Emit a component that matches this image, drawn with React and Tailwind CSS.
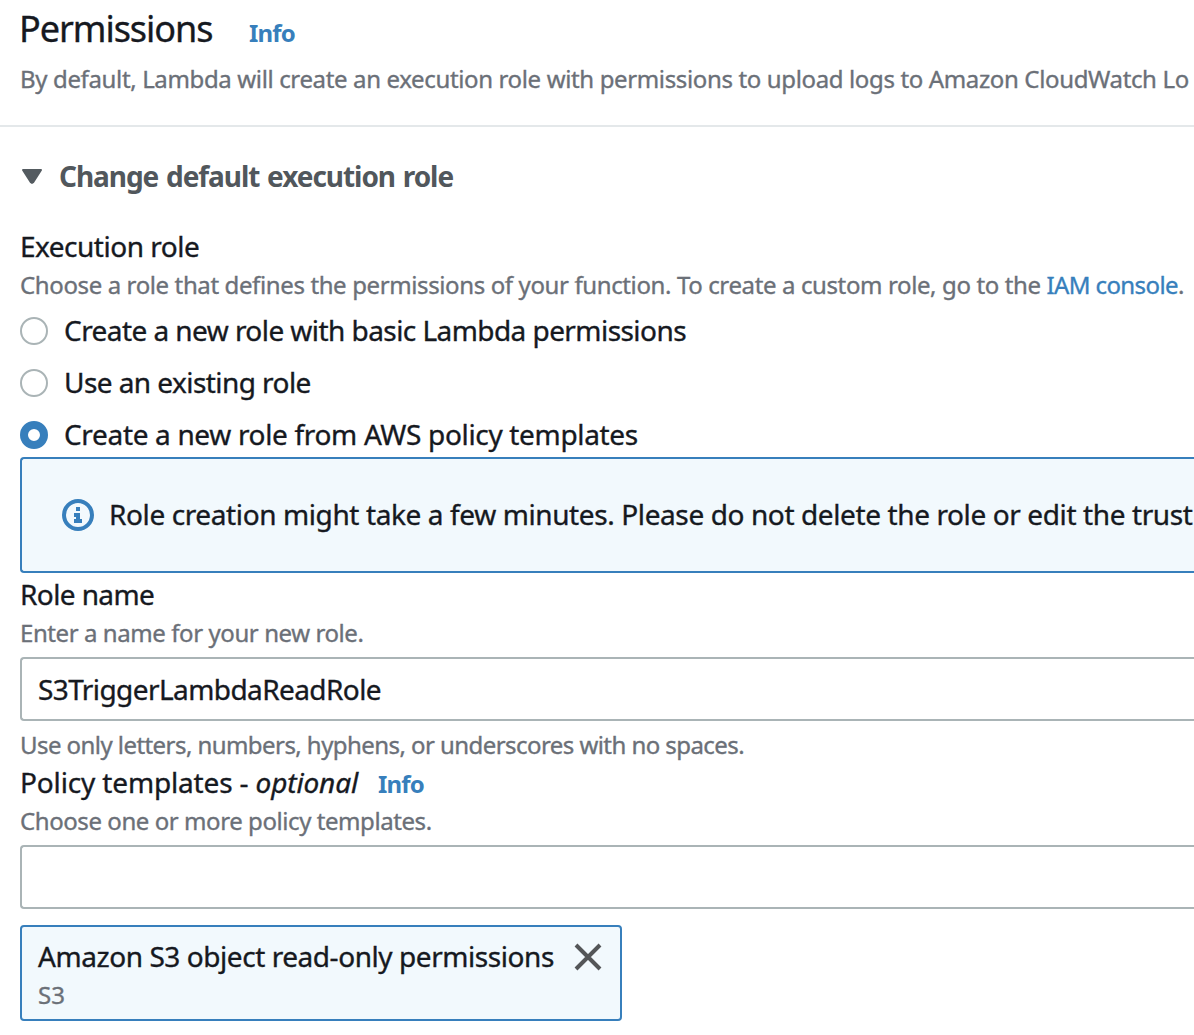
function Hint({ className = '', children }) {
  return (
    <p className={`h-9 whitespace-pre text-[24px] leading-9 text-[#6b7078] ${className}`}>{children}</p>
  );
}

function Label({ className = '', children }) {
  return (
    <div className={`h-9 whitespace-pre text-[28px] leading-9 ${className}`}>{children}</div>
  );
}

function InfoLink({ className = '' }) {
  return (
    <a className={`text-[24px] font-bold tracking-[-0.8px] text-[#377fbc] [-webkit-text-stroke:0px] ${className}`}>Info</a>
  );
}

function Radio({ checked, className, children }) {
  return (
    <label className="flex h-[52px] items-center">
      <span
        className={
          checked
            ? 'size-7 shrink-0 rounded-full border-8 border-[#377fbc] bg-white'
            : 'size-7 shrink-0 rounded-full border-2 border-[#aab4b6] bg-white'
        }
      />
      <span className={`ml-4 whitespace-nowrap pb-[3px] text-[28px] leading-9 ${className}`}>{children}</span>
    </label>
  );
}

function InfoIcon() {
  return (
    <svg className="size-8 shrink-0" viewBox="0 0 32 32" fill="none">
      <circle cx="16" cy="16" r="14" stroke="#377fbc" strokeWidth="4" />
      <path d="M14 8h4v4h-4zM12 14h6v6h2v4h-8v-4h2v-2h-2z" fill="#377fbc" />
    </svg>
  );
}

export default function App() {
  return (
    <div className="h-[1035px] w-full overflow-hidden bg-white font-['Noto_Sans',sans-serif] text-[#16191f] [-webkit-text-stroke:0.35px]">
      <header className="flex h-[125px] flex-col border-b-2 border-[#e4e8ea] box-content pl-5">
        <div className="flex h-14 items-baseline whitespace-nowrap leading-[58px]">
          <h1 className="-ml-px w-[230px] text-[36px] tracking-[-1.05px]">Permissions</h1>
          <InfoLink />
        </div>
        <Hint className="mt-[5px] tracking-[-0.36px]">
          By default, Lambda will create an execution role with permissions to upload logs to Amazon CloudWatch Lo
        </Hint>
      </header>

      <main className="pl-5">
        <div className="mt-[31px] flex h-9 items-center">
          <svg className="h-[18px] w-6" viewBox="0 0 24 18">
            <path d="M3 3h18l-8 12.4q-1 1-2 0z" fill="#545b60" stroke="#545b60" strokeWidth="2" strokeLinejoin="round" />
          </svg>
          <h2 className="ml-[15px] whitespace-nowrap text-[28px] font-bold leading-[38px] tracking-[-1.05px] [word-spacing:1.5px] text-[#51575c] [-webkit-text-stroke:0px]">
            Change default execution role
          </h2>
        </div>

        <Label className="mt-[34px] tracking-[-0.5px]">Execution role</Label>
        <Hint className="mt-[3px] tracking-[-0.38px]">
          Choose a role that defines the permissions of your function. To create a custom role, go to the{' '}
          <a className="tracking-[-0.6px] text-[#377fbc]">IAM console</a>.
        </Hint>

        <div className="mt-0.5">
          <Radio className="tracking-[-0.56px]">Create a new role with basic Lambda permissions</Radio>
          <Radio className="tracking-[-0.56px]">Use an existing role</Radio>
          <Radio checked className="tracking-[-0.33px]">Create a new role from AWS policy templates</Radio>
        </div>

        <div className="-mt-1 flex h-[116px] items-center rounded-l-[4px] border-2 border-r-0 border-[#377fbc] bg-[#f2f9fd] pl-10">
          <InfoIcon />
          <span className="ml-[15px] whitespace-nowrap pb-[3px] text-[28px] leading-9 tracking-[-0.39px]">
            Role creation might take a few minutes. Please do not delete the role or edit the trust
          </span>
        </div>

        <Label className="mt-[3px] tracking-[-0.6px]">Role name</Label>
        <Hint className="mt-[3px] tracking-[-0.42px]">Enter a name for your new role.</Hint>
        <div className="mt-1.5 flex h-16 items-center rounded-l-[4px] border-2 border-r-0 border-[#aab4b6] pb-px pl-4 text-[28px] tracking-[-0.58px]">
          S3TriggerLambdaReadRole
        </div>
        <Hint className="mt-1.5 tracking-[-0.56px]">
          Use only letters, numbers, hyphens, or underscores with no spaces.
        </Hint>

        <Label className="mt-px flex items-baseline">
          <span className="tracking-[-0.15px]">Policy templates - </span>
          <em className="tracking-[-0.15px]">optional</em>
          <InfoLink className="ml-5" />
        </Label>
        <Hint className="mt-[3px] tracking-[-0.43px]">Choose one or more policy templates.</Hint>
        <div className="mt-1.5 h-16 rounded-l-[4px] border-2 border-r-0 border-[#aab4b6]" />

        <div className="mt-4 flex h-24 w-[602px] justify-between rounded-[4px] border-2 border-[#377fbc] bg-[#f2f9fd] pl-4 pr-[18px]">
          <div className="pt-[11px]">
            <Label className="tracking-[-0.44px]">Amazon S3 object read-only permissions</Label>
            <Hint className="mt-[3px]">S3</Hint>
          </div>
          <svg className="mt-4 size-7" viewBox="0 0 28 28" fill="none" stroke="#545658" strokeWidth="4">
            <path d="M2 2l24 24M26 2L2 26" />
          </svg>
        </div>
      </main>
    </div>
  );
}
